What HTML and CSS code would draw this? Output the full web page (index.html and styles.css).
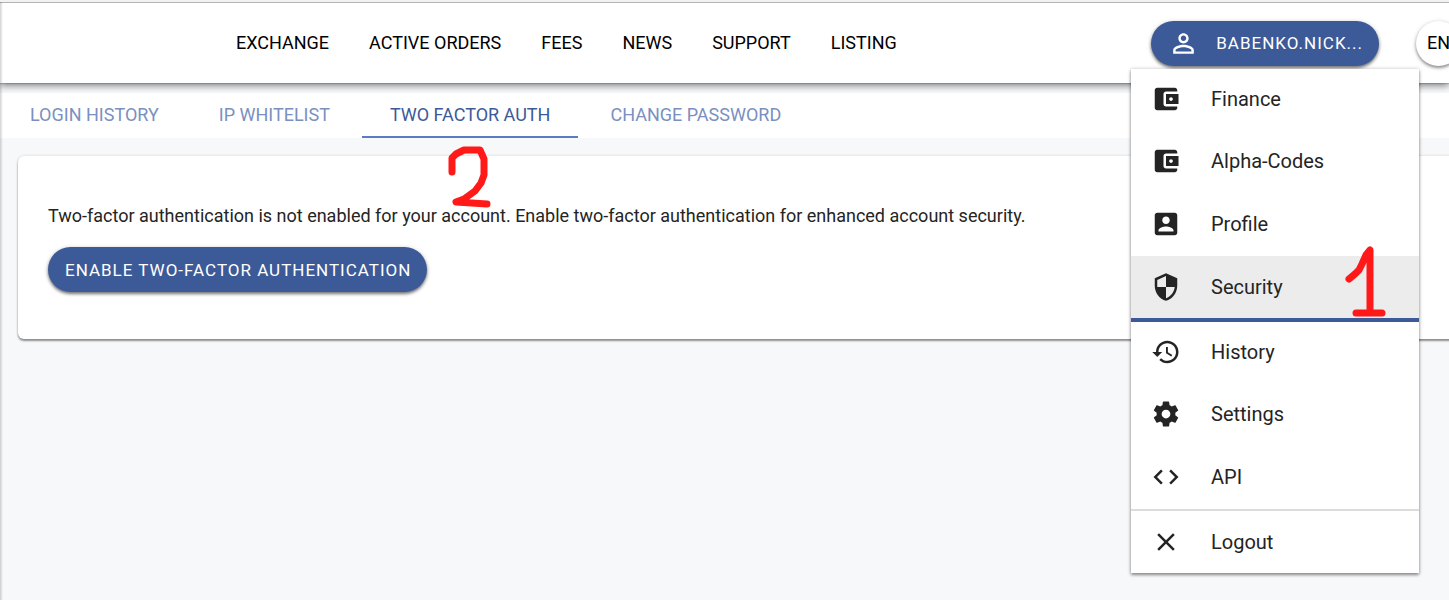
FILE: index.html
```html
<!DOCTYPE html>
<html lang="en">
<head>
<meta charset="utf-8">
<title>Two factor auth</title>
<meta name="viewport" content="width=device-width, initial-scale=1">
<link rel="stylesheet" href="styles.css">
</head>
<body class="page">
<header class="header">
  <nav class="nav" aria-label="Main">
    <a href="#">EXCHANGE</a>
    <a href="#">ACTIVE ORDERS</a>
    <a href="#">FEES</a>
    <a href="#">NEWS</a>
    <a href="#">SUPPORT</a>
    <a href="#">LISTING</a>
  </nav>
  <div class="account">
    <button class="btn account-btn" type="button" aria-haspopup="true" aria-expanded="true">
      <svg class="user-icon" viewBox="0 0 24 24" aria-hidden="true"><path d="M12 5.9c1.16 0 2.1.94 2.1 2.1s-.94 2.1-2.1 2.1S9.900 9.160 9.900 8s.94-2.100 2.100-2.100m0 9c2.970 0 6.100 1.460 6.100 2.100v1.100H5.900V17c0-.64 3.130-2.100 6.100-2.100M12 4C9.790 4 8 5.790 8 8s1.790 4 4 4 4-1.790 4-4-1.790-4-4-4zm0 9c-2.670 0-8 1.340-8 4v3h16v-3c0-2.660-5.330-4-8-4z"/></svg>
      <span>BABENKO.NICK...</span>
    </button>
    <div class="menu">
      <ul class="menu-group">
        <li><a class="item" href="#"><svg class="icon" viewBox="0 0 24 24" aria-hidden="true"><path d="M21 18v1c0 1.100-.9 2-2 2H5c-1.110 0-2-.9-2-2V5c0-1.100.89-2 2-2h14c1.100 0 2 .9 2 2v1h-9c-1.110 0-2 .9-2 2v8c0 1.100.89 2 2 2h9zm-9-2h10V8H12v8zm4-2.500c-.83 0-1.500-.67-1.500-1.500s.67-1.500 1.500-1.500 1.500.67 1.500 1.500-.67 1.500-1.500 1.500z"/></svg>Finance</a></li>
        <li><a class="item" href="#"><svg class="icon" viewBox="0 0 24 24" aria-hidden="true"><path d="M21 18v1c0 1.100-.9 2-2 2H5c-1.110 0-2-.9-2-2V5c0-1.100.89-2 2-2h14c1.100 0 2 .9 2 2v1h-9c-1.110 0-2 .9-2 2v8c0 1.100.89 2 2 2h9zm-9-2h10V8H12v8zm4-2.500c-.83 0-1.500-.67-1.500-1.500s.67-1.500 1.500-1.500 1.500.67 1.500 1.500-.67 1.500-1.500 1.500z"/></svg>Alpha-Codes</a></li>
        <li><a class="item" href="#"><svg class="icon" viewBox="0 0 24 24" aria-hidden="true"><path d="M3 5v14c0 1.100.89 2 2 2h14c1.100 0 2-.9 2-2V5c0-1.100-.9-2-2-2H5c-1.110 0-2 .9-2 2zm12 4c0 1.660-1.340 3-3 3s-3-1.340-3-3 1.340-3 3-3 3 1.340 3 3zm-9 8c0-2 4-3.100 6-3.100s6 1.100 6 3.100v1H6v-1z"/></svg>Profile</a></li>
        <li class="current"><a class="item" href="#" aria-current="page"><svg class="icon" viewBox="0 0 24 24" aria-hidden="true"><path d="M12 1L3 5v6c0 5.550 3.840 10.740 9 12 5.160-1.260 9-6.450 9-12V5l-9-4zm0 10.990h7c-.53 4.120-3.280 7.790-7 8.940V12H5V6.300l7-3.110v8.800z"/></svg>Security</a>
          <svg class="mark mark-one" viewBox="0 0 46 76" role="img" aria-label="Step 1"><path d="M8 35l6-5 4-4 3-6 4-9 4-5v62M15 69h26"/></svg>
        </li>
      </ul>
      <ul class="menu-group">
        <li><a class="item" href="#"><svg class="icon" viewBox="0 0 24 24" aria-hidden="true"><path d="M13 3c-4.970 0-9 4.030-9 9H1l3.890 3.890.07.14L9 12H6c0-3.870 3.130-7 7-7s7 3.130 7 7-3.130 7-7 7c-1.930 0-3.680-.79-4.940-2.060l-1.420 1.420C8.270 19.990 10.510 21 13 21c4.970 0 9-4.030 9-9s-4.030-9-9-9zm-1 5v5l4.280 2.540.72-1.210-3.500-2.080V8H12z"/></svg>History</a></li>
        <li><a class="item" href="#"><svg class="icon" viewBox="0 0 24 24" aria-hidden="true"><path d="M19.430 12.980c.04-.32.070-.64.070-.98s-.03-.66-.07-.98l2.110-1.650c.19-.15.240-.42.120-.64l-2-3.460c-.12-.22-.39-.3-.61-.22l-2.490 1c-.52-.4-1.080-.73-1.690-.98l-.38-2.650C14.460 2.180 14.250 2 14 2h-4c-.25 0-.46.18-.49.42l-.38 2.650c-.61.25-1.170.59-1.690.98l-2.490-1c-.23-.09-.49 0-.61.22l-2 3.460c-.13.22-.07.49.12.64l2.110 1.650c-.04.32-.07.650-.07.98s.03.66.07.98l-2.110 1.650c-.19.15-.24.42-.12.64l2 3.460c.12.22.39.3.61.22l2.490-1c.52.4 1.080.73 1.690.98l.38 2.650c.03.24.24.42.49.42h4c.25 0 .46-.18.49-.42l.38-2.650c.61-.25 1.170-.59 1.690-.98l2.490 1c.23.090.49 0 .61-.22l2-3.460c.12-.22.070-.49-.12-.64l-2.110-1.650zM12 15.500c-1.930 0-3.500-1.570-3.500-3.500s1.570-3.500 3.500-3.500 3.500 1.570 3.500 3.500-1.570 3.500-3.500 3.500z"/></svg>Settings</a></li>
        <li><a class="item" href="#"><svg class="icon" viewBox="0 0 24 24" aria-hidden="true"><path d="M9.400 16.600L4.800 12l4.600-4.600L8 6l-6 6 6 6 1.400-1.400zm5.200 0l4.600-4.600-4.600-4.600L16 6l6 6-6 6-1.400-1.400z"/></svg>API</a></li>
        <li class="logout"><a class="item" href="#"><svg class="icon" viewBox="0 0 24 24" aria-hidden="true"><path d="M19 6.410L17.590 5 12 10.590 6.410 5 5 6.410 10.590 12 5 17.590 6.410 19 12 13.410 17.590 19 19 17.590 13.410 12z"/></svg>Logout</a></li>
      </ul>
    </div>
  </div>
  <button class="lang" type="button">EN</button>
</header>
<nav class="tabs" aria-label="Security">
  <a class="tab" href="#">LOGIN HISTORY</a>
  <a class="tab" href="#">IP WHITELIST</a>
  <a class="tab active" href="#" aria-current="page">TWO FACTOR AUTH
    <svg class="mark mark-two" viewBox="0 0 46 64" role="img" aria-label="Step 2"><path d="M7 27V13l4-4 8-4h16l4 9v16l-3 8-6 8-11 8-8 3 31 2"/></svg>
  </a>
  <a class="tab" href="#">CHANGE PASSWORD</a>
</nav>
<main class="card">
  <p class="notice">Two-factor authentication is not enabled for your account. Enable two-factor authentication for enhanced account security.</p>
  <button class="btn" type="button">ENABLE TWO-FACTOR AUTHENTICATION</button>
</main>
</body>
</html>
```
FILE: styles.css
```css
* {
  box-sizing: border-box;
}

.page {
  position: relative;
  min-height: 100vh;
  margin: 0;
  overflow-x: hidden;
  border-top: 2px solid #f2f2f2;
  background: #f7f8fa;
  color: #242424;
  font: 18px/24px Roboto, sans-serif;
}

/* soft shade along the left window edge */
.page::after {
  content: "";
  position: absolute;
  z-index: 5;
  top: 0;
  bottom: 0;
  left: 0;
  width: 3px;
  background: linear-gradient(to right, rgba(0, 0, 0, .18), rgba(0, 0, 0, 0));
  pointer-events: none;
}

a {
  color: inherit;
  text-decoration: none;
}

button {
  border: 0;
  font: inherit;
  cursor: pointer;
}

.header {
  position: relative;
  display: flex;
  align-items: center;
  height: 81px;
  margin-bottom: 10px;
  padding-left: 236px;
  border-top: 1px solid #b4b4b4;
  background: #fff;
  box-shadow: 0 1px 1px rgba(0, 0, 0, .15), 0 3px 7px rgba(0, 0, 0, .45);
}

.nav {
  display: flex;
  gap: 40px;
  color: #000;
  white-space: nowrap;
}

.account {
  position: relative;
  z-index: 3;
  margin-left: auto;
}

.btn {
  display: inline-flex;
  align-items: center;
  height: 45px;
  padding: 0 16px 0 17px;
  border-radius: 23px;
  background: #3d5a98;
  box-shadow: 0 2px 3px rgba(0, 0, 0, .45), 0 1px 5px rgba(0, 0, 0, .2);
  color: #fff;
  font-size: 17px;
  letter-spacing: 1px;
  white-space: nowrap;
}

.account-btn {
  gap: 17px;
}

.user-icon {
  width: 31px;
  height: 31px;
  fill: currentColor;
}

.lang {
  flex: none;
  width: 45px;
  height: 45px;
  margin: 0 -12px 0 37px;
  padding: 0;
  border-radius: 50%;
  background: #fff;
  box-shadow: 0 2px 3px rgba(0, 0, 0, .35), 0 1px 5px rgba(0, 0, 0, .2);
  color: #000;
}

.menu {
  position: absolute;
  top: 48px;
  right: -40px;
  width: 288px;
  background: #fff;
  box-shadow: 0 2px 3px rgba(0, 0, 0, .4), 0 0 4px rgba(0, 0, 0, .2);
  font-size: 20px;
}

.menu-group {
  display: grid;
  gap: 1px;
  margin: 0;
  padding: 0;
  list-style: none;
}

.item {
  display: flex;
  align-items: center;
  gap: 30px;
  height: 62px;
  padding: 0 20px;
}

.menu-group li:first-child .item {
  height: 60px;
}

.icon {
  width: 30px;
  height: 30px;
  fill: currentColor;
}

.current {
  position: relative;
  border-bottom: 4px solid #3d5a98;
  background: #ececec;
}

.logout {
  border-top: 2px solid #dcdcdc;
}

.mark {
  position: absolute;
  z-index: 2;
  width: 46px;
  fill: none;
  stroke: #ff1919;
  stroke-width: 7;
  stroke-linecap: round;
  stroke-linejoin: round;
}

.mark-one {
  top: -12px;
  right: 32px;
}

.mark-two {
  top: 52px;
  left: 83px;
}

.tabs {
  position: relative;
  display: flex;
  gap: 4px;
  height: 45px;
  padding-left: 2px;
  background: #fff;
  color: #7a90bf;
  white-space: nowrap;
}

.tab {
  position: relative;
  padding: 10px 28px 9px;
  border-bottom: 2px solid transparent;
}

.active {
  border-color: #5b7cc4;
  color: #3d5a98;
}

.card {
  margin: 18px -8px 18px 18px;
  padding: 48px 30px 47px;
  border-radius: 6px;
  background: #fff;
  box-shadow: 0 2px 2px rgba(0, 0, 0, .4), 0 0 3px rgba(0, 0, 0, .15);
}

.notice {
  margin: 0 0 19px;
}
```
